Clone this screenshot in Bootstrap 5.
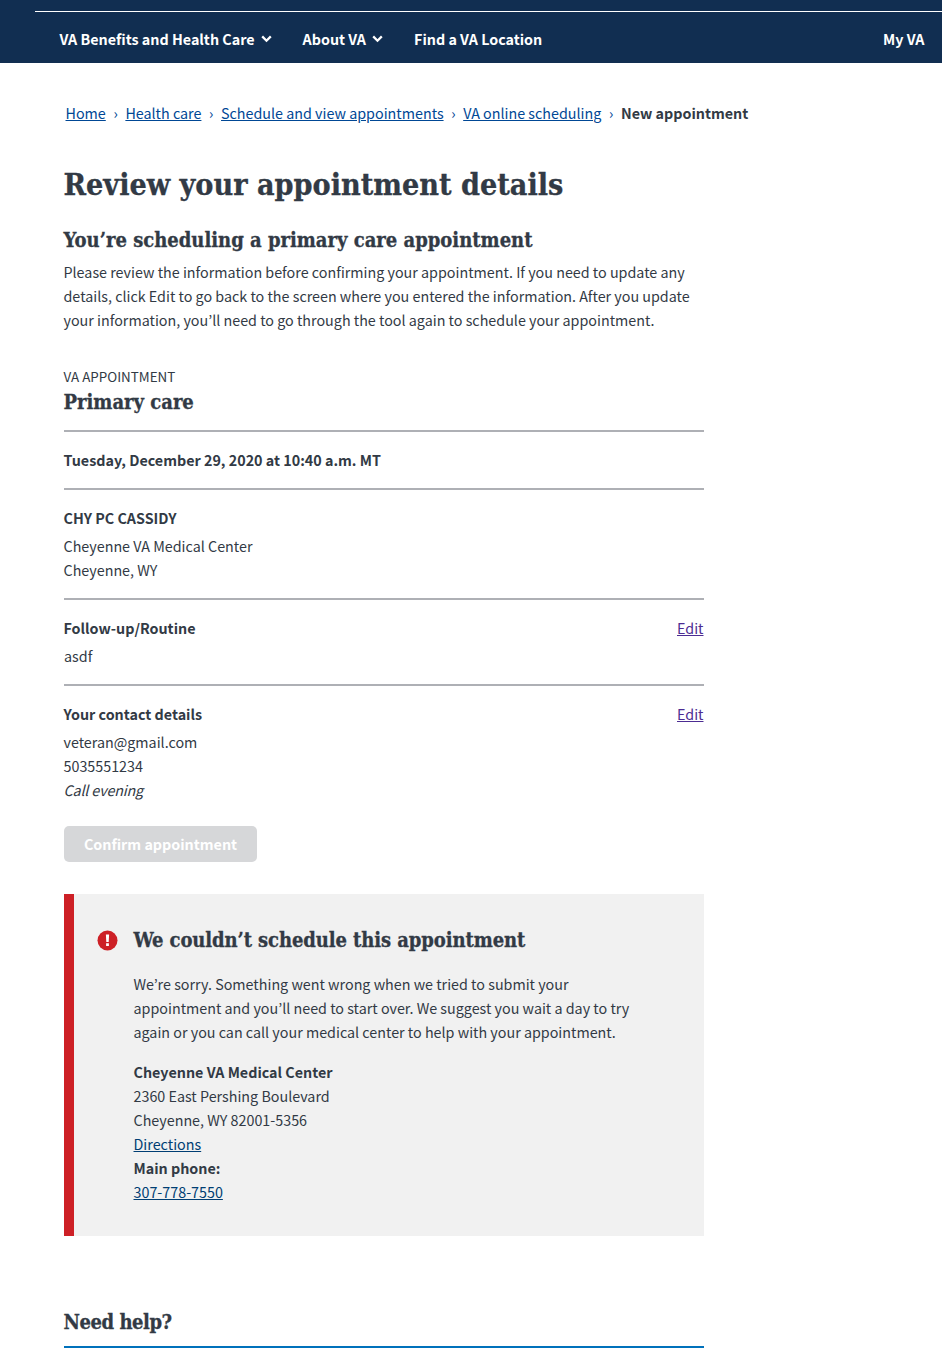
<!DOCTYPE html>
<html lang="en">
<head>
<meta charset="utf-8">
<meta name="viewport" content="width=device-width, initial-scale=1">
<title>Review your appointment details</title>
<link href="https://cdn.jsdelivr.net/npm/bootstrap@5.3.0/dist/css/bootstrap.min.css" rel="stylesheet">
<style>
  body { font-family: "Noto Sans CJK JP", "Liberation Sans", sans-serif; font-size: 14.32px; line-height: 24px; color: #323a45; overflow: hidden; height: 1351px; }
  a { color: #004795; text-underline-offset: 1px; }
  .slab { font-family: "DejaVu Serif Condensed", "DejaVu Serif", serif; font-stretch: condensed; font-weight: 700; margin: 0; white-space: nowrap; -webkit-text-stroke: .3px currentColor; }
  .title-xl { font-size: 30.2px; line-height: 40px; padding-top: 39px; }
  .title-md { font-size: 20px; line-height: 26px; }
  .site-bar { background: #112e51; height: 63px; padding-top: 11px; color: #fff; font-weight: 700; }
  .site-rule { margin-left: 35px; border-top: 1px solid #fff; padding: 15px 17.5px 0 24.5px; }
  .site-rule a { color: #fff; text-decoration: none; }
  .site-rule svg { margin-left: 6px; width: 11px; height: 8px; }
  .site-links { gap: 31px; }
  .crumbs { padding: 38px 0 0 65.5px; height: 63px; white-space: nowrap; }
  .crumbs .sep { color: #004795; width: 19.6px; text-align: center; }
  .page-col { width: 640px; margin-left: 64px; text-indent: -.5px; }
  .kind { font-size: 13.4px; padding-top: 32px; }
  .summary-row { border-top: 2px solid #aeb0b5; padding: 16px 0; }
  .summary-row em { letter-spacing: -.15px; }
  .lines { white-space: nowrap; margin-left: -.5px; text-indent: 0; }
  .edit-link { color: #4c2c92; margin-right: .5px; }
  .btn-confirm { background: #d6d7d9; color: #fff; width: 193px; height: 36px; border-radius: 5px; border: 0; font-size: 14.32px; font-weight: 700; line-height: 24px; padding: 0; margin-top: 8px; }
  .notice { background: #f1f1f1; border-left: 10px solid #cd2026; height: 342px; margin-top: 32px; padding: 32px 0 0 23px; }
  .notice svg { margin-top: 4px; width: 21px; height: 21px; margin-right: 16px; }
  .notice .slab { letter-spacing: -.09px; padding-top: 1px; }
  .notice a { color: #003e73; }
  .help-head { margin-top: 73px; border-bottom: 2px solid #0071bb; height: 39px; letter-spacing: -.45px; }
</style>
<script src="https://cdn.jsdelivr.net/npm/bootstrap@5.3.0/dist/js/bootstrap.bundle.min.js"></script>
</head>
<body>
<header class="site-bar">
  <nav class="site-rule d-flex justify-content-between text-nowrap">
    <div class="site-links d-flex">
      <a href="#" class="d-flex align-items-center">VA Benefits and Health Care
        <svg viewBox="0 0 11 8"><path d="M1.2 1.4 5.5 5.7 9.8 1.4" fill="none" stroke="#fff" stroke-width="2.3"/></svg></a>
      <a href="#" class="d-flex align-items-center">About VA
        <svg viewBox="0 0 11 8"><path d="M1.2 1.4 5.5 5.7 9.8 1.4" fill="none" stroke="#fff" stroke-width="2.3"/></svg></a>
      <a href="#">Find a VA Location</a>
    </div>
    <a href="#">My VA</a>
  </nav>
</header>
<nav class="crumbs d-flex">
  <a href="#">Home</a><span class="sep">›</span><a href="#">Health care</a><span class="sep">›</span><a href="#">Schedule and view appointments</a><span class="sep">›</span><a href="#">VA online scheduling</a><span class="sep">›</span><strong>New appointment</strong>
</nav>
<main class="page-col">
  <h1 class="slab title-xl">Review your appointment details</h1>
  <h2 class="slab title-md" style="padding-top:22px">You’re scheduling a primary care appointment</h2>
  <p class="lines mb-0" style="padding-top:7px">Please review the information before confirming your appointment. If you need to update any<br>details, click Edit to go back to the screen where you entered the information. After you update<br>your information, you’ll need to go through the tool again to schedule your appointment.</p>
  <div class="kind">VA APPOINTMENT</div>
  <h2 class="slab title-md" style="padding-top:1px;margin-bottom:15px">Primary care</h2>
  <section class="summary-row"><strong class="d-block">Tuesday, December 29, 2020 at 10:40 a.m. MT</strong></section>
  <section class="summary-row"><strong class="d-block mb-1">CHY PC CASSIDY</strong><div class="lines">Cheyenne VA Medical Center<br>Cheyenne, WY</div></section>
  <section class="summary-row"><div class="d-flex justify-content-between mb-1"><strong>Follow-up/Routine</strong><a class="edit-link" href="#">Edit</a></div>asdf</section>
  <section class="summary-row"><div class="d-flex justify-content-between mb-1"><strong>Your contact details</strong><a class="edit-link" href="#">Edit</a></div><div class="lines">veteran@gmail.com<br>5035551234<br><em>Call evening</em></div></section>
  <button class="btn btn-confirm d-block" type="button">Confirm appointment</button>
  <section class="notice d-flex align-items-start" role="alert">
    <svg viewBox="0 0 21 21"><circle cx="10.5" cy="10.5" r="10" fill="#cd2026"/><path d="M8.9 4.5h3.2l-.4 7.5H9.3zM9.1 13.3h2.8v2.6H9.1z" fill="#fff"/></svg>
    <div class="lines">
      <h2 class="slab title-md">We couldn’t schedule this appointment</h2>
      <p class="mb-3" style="padding-top:19px">We’re sorry. Something went wrong when we tried to submit your<br>appointment and you’ll need to start over. We suggest you wait a day to try<br>again or you can call your medical center to help with your appointment.</p>
      <address class="mb-0" style="line-height:24px"><strong>Cheyenne VA Medical Center</strong><br>2360 East Pershing Boulevard<br>Cheyenne, WY 82001-5356<br><a href="#">Directions</a><br><strong>Main phone:</strong><br><a href="#">307-778-7550</a></address>
    </div>
  </section>
  <h2 class="slab title-md help-head">Need help?</h2>
</main>
</body>
</html>
